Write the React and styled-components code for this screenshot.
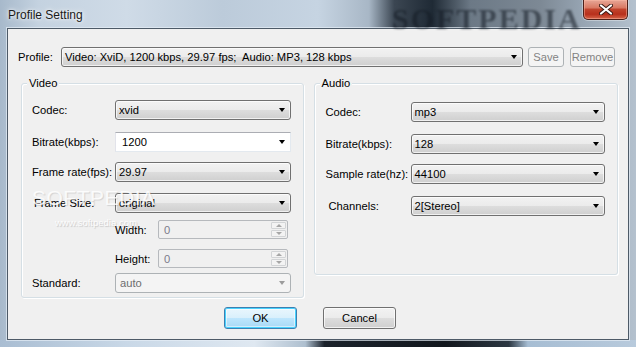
import React from "react";
import styled, { createGlobalStyle } from "styled-components";

const Global = createGlobalStyle`
  html, body { margin: 0; padding: 0; background: #8fa3b7; }
  body { font-family: "Liberation Sans", Arial, sans-serif; }
  * { box-sizing: border-box; }
`;

const Window = styled.div`
  position: relative;
  width: 636px;
  height: 347px;
  display: flex;
  flex-direction: column;
  overflow: hidden;
  background:
    linear-gradient(90deg, #a9bdd2 0%, #c9d8e7 20%, #dfe8f1 40%, #aebfcf 48%, #1b222b 51%, #12171d 70%, #2c3742 80%, #a6bdd3 83%, #b8cadc 100%) bottom / 100% 7px no-repeat,
    linear-gradient(90deg, #a7b9cb 0%, #c4d2e0 6%, #cfdbe7 20%, #bccbda 35%, #c6d4e2 50%, #a8b7c6 58%, #3b4652 62%, #1f2a35 68%, #6c7986 74%, #7d8995 85%, #98a6b4 92%, #b4c1ce 100%);
`;

const TitleBar = styled.div`
  height: 28px;
  display: flex;
  align-items: flex-start;
  justify-content: space-between;
  padding: 0 8px;
`;

const Title = styled.div`
  font-family: "Segoe UI", "Liberation Sans", Arial, sans-serif;
  font-size: 12px;
  color: #1a1a1a;
  padding-top: 8px;
  text-shadow: 0 0 6px rgba(255, 255, 255, 0.9), 0 0 3px rgba(255, 255, 255, 0.9);
`;

const BgMark = styled.div`
  position: absolute;
  top: 2px;
  left: 392px;
  font-family: "Liberation Serif", serif;
  font-weight: bold;
  font-size: 30px;
  letter-spacing: 2px;
  color: rgba(20, 28, 36, 0.55);
  filter: blur(1.2px);
  pointer-events: none;
`;

const CloseButton = styled.div`
  position: relative;
  z-index: 1;
  width: 45px;
  height: 20px;
  border: 1px solid #4e2019;
  border-top: none;
  border-radius: 0 0 5px 5px;
  background: linear-gradient(180deg, #e7a797 0%, #d97a64 40%, #c0432c 50%, #b8301c 75%, #d6654a 100%);
  box-shadow: inset 0 0 0 1px rgba(255, 190, 170, 0.45), 0 0 0 1px rgba(255, 255, 255, 0.35);
  display: flex;
  align-items: center;
  justify-content: center;
`;

const Client = styled.div`
  flex: 1;
  margin: 0 7px 7px 7px;
  background: #f0f0f0;
  border: 1px solid #4d5a67;
  box-shadow: 0 0 0 1px rgba(230, 238, 246, 0.7);
  padding: 18px 10px 0 10px;
  display: flex;
  flex-direction: column;
  font-size: 11.2px;
  color: #000;
`;

const ProfileRow = styled.div`
  display: flex;
  align-items: center;
  height: 20px;
  padding-right: 3px;
`;

const ProfileLabel = styled.div`
  width: 43px;
  flex: none;
`;

const Combo = styled.div`
  position: relative;
  flex: ${(p) => (p.$grow ? 1 : "none")};
  width: ${(p) => (p.$w ? `${p.$w}px` : "auto")};
  height: 20px;
  display: flex;
  align-items: center;
  padding-left: 3px;
  border: 1px solid #707070;
  border-radius: 3px;
  background: linear-gradient(180deg, #f2f2f2 0%, #ebebeb 50%, #dddddd 51%, #cfcfcf 100%);
  box-shadow: inset 0 0 0 1px rgba(255, 255, 255, 0.7);
  color: #000;
  white-space: pre;
`;

const EditCombo = styled.div`
  position: relative;
  width: ${(p) => p.$w}px;
  height: 20px;
  display: flex;
  align-items: center;
  padding-left: 6px;
  background: #ffffff;
  border: 1px solid #e3e9ef;
  border-top-color: #abadb3;
  border-left-color: #e2e3ea;
`;

const DisabledCombo = styled.div`
  position: relative;
  width: ${(p) => p.$w}px;
  height: 20px;
  display: flex;
  align-items: center;
  padding-left: 4px;
  border: 1px solid #adb2b5;
  border-radius: 3px;
  background: #f4f4f4;
  color: #6d6d6d;
`;

const Arrow = styled.span`
  position: absolute;
  right: 5px;
  top: 50%;
  margin-top: -2px;
  width: 0;
  height: 0;
  border-left: 3.5px solid transparent;
  border-right: 3.5px solid transparent;
  border-top: 4px solid ${(p) => (p.$dim ? "#9c9c9c" : "#000")};
`;

const PushButton = styled.div`
  width: ${(p) => p.$w}px;
  height: ${(p) => p.$h || 20}px;
  margin-left: ${(p) => p.$ml || 0}px;
  flex: none;
  display: flex;
  align-items: center;
  justify-content: center;
  border-radius: 3px;
  border: 1px solid ${(p) => (p.$disabled ? "#adb2b5" : p.$default ? "#3c7fb1" : "#707070")};
  color: ${(p) => (p.$disabled ? "#838383" : "#000")};
  background: ${(p) =>
    p.$disabled
      ? "#f4f4f4"
      : p.$default
      ? "linear-gradient(180deg, #eaf6fd 0%, #d9f0fc 50%, #bee6fd 51%, #a7d9f5 100%)"
      : "linear-gradient(180deg, #f2f2f2 0%, #ebebeb 50%, #dddddd 51%, #cfcfcf 100%)"};
  box-shadow: ${(p) =>
    p.$default
      ? "inset 0 0 0 1px #48d2fe, inset 0 0 0 2px rgba(255,255,255,0.5)"
      : p.$disabled
      ? "none"
      : "inset 0 0 0 1px rgba(255,255,255,0.7)"};
`;

const Groups = styled.div`
  display: flex;
  align-items: flex-start;
  gap: 10px;
  margin: 16px 0 0 3px;
`;

const GroupBox = styled.div`
  position: relative;
  width: ${(p) => p.$w}px;
  height: ${(p) => p.$h}px;
  border: 1px solid #d5dfe5;
  border-radius: 3px;
  box-shadow: inset 1px 1px 0 #ffffff, 1px 1px 0 #ffffff;
  padding: ${(p) => p.$pt}px 0 0 ${(p) => p.$pl}px;
  display: flex;
  flex-direction: column;
`;

const Legend = styled.span`
  position: absolute;
  top: -7px;
  left: 5px;
  padding: 0 2px;
  background: #f0f0f0;
  line-height: 13px;
`;

const FieldRow = styled.div`
  display: flex;
  align-items: center;
  margin-top: ${(p) => p.$mt || 0}px;
`;

const FieldLabel = styled.div`
  width: ${(p) => p.$w}px;
  flex: none;
  padding-left: ${(p) => p.$indent || 0}px;
`;

const SpinRow = styled.div`
  display: flex;
  align-items: center;
  margin-top: ${(p) => p.$mt}px;
  margin-left: 83px;
`;

const SpinLabel = styled.div`
  width: 43px;
  flex: none;
`;

const SpinBox = styled.div`
  position: relative;
  width: 130px;
  height: 19px;
  border: 1px solid #b6b9bd;
  border-radius: 2px;
  background: #f0f0f0;
  display: flex;
  align-items: center;
  padding-left: 5px;
  color: #7c7c8c;
`;

const SpinButtons = styled.div`
  position: absolute;
  right: 1px;
  top: 1px;
  bottom: 1px;
  width: 15px;
  display: flex;
  flex-direction: column;
  gap: 1px;
`;

const SpinHalf = styled.div`
  flex: 1;
  border: 1px solid #d2d4d6;
  border-radius: 1px;
  background: #f3f3f3;
  display: flex;
  align-items: center;
  justify-content: center;
`;

const TinyTri = styled.span`
  width: 0;
  height: 0;
  border-left: 3px solid transparent;
  border-right: 3px solid transparent;
  ${(p) => (p.$up ? "border-bottom: 3px solid #a6a6a6;" : "border-top: 3px solid #a6a6a6;")}
`;

const ButtonRow = styled.div`
  display: flex;
  margin: 9px 0 0 206px;
  gap: 26px;
`;

const WaterBig = styled.div`
  position: absolute;
  left: 32px;
  top: 186px;
  font-family: "Liberation Sans", Arial, sans-serif;
  font-size: 21px;
  letter-spacing: 0.5px;
  color: rgba(255, 255, 255, 0.85);
  text-shadow: 1px 1px 1px rgba(0, 0, 0, 0.12);
  pointer-events: none;
`;

const WaterSmall = styled.div`
  position: absolute;
  left: 55px;
  top: 217px;
  font-size: 9.5px;
  color: rgba(255, 255, 255, 0.95);
  text-shadow: 1px 1px 1px rgba(0, 0, 0, 0.18);
  pointer-events: none;
  font-family: "Liberation Sans", Arial, sans-serif;
`;

function CloseX() {
  return (
    <svg width="14" height="11" viewBox="0 0 14 11">
      <path d="M2 1.5 L12 9.5 M12 1.5 L2 9.5" stroke="#3a1a14" strokeWidth="4" strokeLinecap="round" fill="none" />
      <path d="M2 1.5 L12 9.5 M12 1.5 L2 9.5" stroke="#ffffff" strokeWidth="2.2" strokeLinecap="round" fill="none" />
    </svg>
  );
}

function Select({ value, w, grow }) {
  return (
    <Combo $w={w} $grow={grow}>
      {value}
      <Arrow />
    </Combo>
  );
}

function Spin({ label, mt }) {
  return (
    <SpinRow $mt={mt}>
      <SpinLabel>{label}</SpinLabel>
      <SpinBox>
        0
        <SpinButtons>
          <SpinHalf>
            <TinyTri $up />
          </SpinHalf>
          <SpinHalf>
            <TinyTri />
          </SpinHalf>
        </SpinButtons>
      </SpinBox>
    </SpinRow>
  );
}

export default function App() {
  return (
    <>
      <Global />
      <Window>
        <BgMark>SOFTPEDIA</BgMark>
        <TitleBar>
          <Title>Profile Setting</Title>
          <CloseButton>
            <CloseX />
          </CloseButton>
        </TitleBar>
        <Client>
          <ProfileRow>
            <ProfileLabel>Profile:</ProfileLabel>
            <Select grow value={"Video: XviD, 1200 kbps, 29.97 fps;  Audio: MP3, 128 kbps"} />
            <PushButton $w={36} $ml={5} $disabled>
              Save
            </PushButton>
            <PushButton $w={45} $ml={6} $disabled>
              Remove
            </PushButton>
          </ProfileRow>
          <Groups>
            <GroupBox $w={283} $h={215} $pt={16} $pl={10}>
              <Legend>Video</Legend>
              <FieldRow>
                <FieldLabel $w={83}>Codec:</FieldLabel>
                <Select w={176} value="xvid" />
              </FieldRow>
              <FieldRow $mt={12}>
                <FieldLabel $w={83}>Bitrate(kbps):</FieldLabel>
                <EditCombo $w={176}>
                  1200
                  <Arrow />
                </EditCombo>
              </FieldRow>
              <FieldRow $mt={10}>
                <FieldLabel $w={83}>Frame rate(fps):</FieldLabel>
                <Select w={176} value="29.97" />
              </FieldRow>
              <FieldRow $mt={11}>
                <FieldLabel $w={83} $indent={2}>
                  Frame Size:
                </FieldLabel>
                <Select w={176} value="original" />
              </FieldRow>
              <Spin label="Width:" mt={7} />
              <Spin label="Height:" mt={10} />
              <FieldRow $mt={5}>
                <FieldLabel $w={83}>Standard:</FieldLabel>
                <DisabledCombo $w={176}>
                  auto
                  <Arrow $dim />
                </DisabledCombo>
              </FieldRow>
            </GroupBox>
            <GroupBox $w={305} $h={192} $pt={18} $pl={11}>
              <Legend>Audio</Legend>
              <FieldRow>
                <FieldLabel $w={85}>Codec:</FieldLabel>
                <Select w={194} value="mp3" />
              </FieldRow>
              <FieldRow $mt={12}>
                <FieldLabel $w={85}>Bitrate(kbps):</FieldLabel>
                <Select w={194} value="128" />
              </FieldRow>
              <FieldRow $mt={10}>
                <FieldLabel $w={85}>Sample rate(hz):</FieldLabel>
                <Select w={194} value="44100" />
              </FieldRow>
              <FieldRow $mt={12}>
                <FieldLabel $w={85} $indent={3}>
                  Channels:
                </FieldLabel>
                <Select w={194} value="2[Stereo]" />
              </FieldRow>
            </GroupBox>
          </Groups>
          <ButtonRow>
            <PushButton $w={73} $h={22} $default>
              OK
            </PushButton>
            <PushButton $w={73} $h={22}>
              Cancel
            </PushButton>
          </ButtonRow>
        </Client>
        <WaterBig>SOFTPEDIA</WaterBig>
        <WaterSmall>www.softpedia.com</WaterSmall>
      </Window>
    </>
  );
}
